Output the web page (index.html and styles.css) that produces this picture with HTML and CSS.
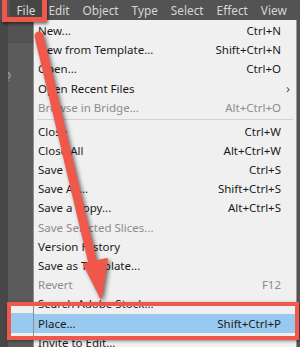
FILE: index.html
```html
<!DOCTYPE html>
<html lang="en">

<head>
    <meta charset="UTF-8">
    <title>File menu</title>
    <link rel="stylesheet" href="styles.css">
</head>

<body>
    <div class="menubar">
        <span class="menubar-item active">File</span>
        <span class="menubar-item">Edit</span>
        <span class="menubar-item">Object</span>
        <span class="menubar-item">Type</span>
        <span class="menubar-item">Select</span>
        <span class="menubar-item">Effect</span>
        <span class="menubar-item">View</span>
    </div>
    <div class="workspace">
        <div class="sidebar">
            <div class="sidebar-strip"></div>
            <div class="sidebar-panel"><span class="at">@</span></div>
        </div>
        <div class="menu">
            <div class="row"><span>New...</span><span>Ctrl+N</span></div>
            <div class="row"><span>New from Template...</span><span>Shift+Ctrl+N</span></div>
            <div class="row"><span>Open...</span><span>Ctrl+O</span></div>
            <div class="row sub"><span>Open Recent Files</span><span class="caret">&#8250;</span></div>
            <div class="row off"><span>Browse in Bridge...</span><span>Alt+Ctrl+O</span></div>
            <div class="sep"></div>
            <div class="row"><span>Close</span><span>Ctrl+W</span></div>
            <div class="row"><span>Close All</span><span>Alt+Ctrl+W</span></div>
            <div class="row"><span>Save</span><span>Ctrl+S</span></div>
            <div class="row"><span>Save As...</span><span>Shift+Ctrl+S</span></div>
            <div class="row"><span>Save a Copy...</span><span>Alt+Ctrl+S</span></div>
            <div class="row off"><span>Save Selected Slices...</span><span></span></div>
            <div class="row"><span>Version History</span><span></span></div>
            <div class="row"><span>Save as Template...</span><span></span></div>
            <div class="row off"><span>Revert</span><span>F12</span></div>
            <div class="row"><span>Search Adobe Stock...</span><span></span></div>
            <div class="row hot"><span>Place...</span><span>Shift+Ctrl+P</span></div>
            <div class="row"><span>Invite to Edit...</span><span></span></div>
        </div>
    </div>

    <!-- annotation layer -->
    <div class="callout-fill"></div>
    <div class="callout"></div>
    <div class="file-box"></div>
    <svg class="arrow" width="300" height="347" viewBox="0 0 300 347">
        <line x1="39" y1="36" x2="95" y2="272" stroke="#f0584c" stroke-width="9" stroke-linecap="round" />
        <polygon points="101,298 84,264 107,259" fill="#f0584c" stroke="#f0584c" stroke-width="2" stroke-linejoin="round" />
    </svg>
</body>

</html>
```

FILE: styles.css
```css
* {
    margin: 0;
    padding: 0;
    box-sizing: border-box;
}

html,
body {
    width: 300px;
    height: 347px;
    overflow: hidden;
}

body {
    position: relative;
    background-color: #535353;
    font-family: "Noto Sans", "Open Sans", sans-serif;
    font-size: 11.5px;
}
/* 菜单栏 */

.menubar {
    height: 20px;
    display: flex;
    align-items: center;
    padding-left: 10px;
    background-color: #535353;
    color: #d6d6d6;
    font-size: 11.8px;
}

.menubar-item {
    height: 20px;
    line-height: 20px;
    padding: 0 6.5px;
}

.menubar-item.active {
    background-color: #464646;
}
/* 工作区 */

.workspace {
    display: flex;
    height: 327px;
}

.sidebar {
    width: 33px;
    display: flex;
}

.sidebar-strip {
    width: 8px;
    background-color: #474747;
}

.sidebar-panel {
    flex: 1;
    background-color: #5b5b5b;
    border-top: 1px solid #4a4a4a;
    margin-top: 22px;
    padding-top: 26px;
    color: #bcbcbc;
    font-size: 10px;
    overflow: hidden;
}

.sidebar-panel .at {
    margin-left: -6px;
}

.menu {
    position: relative;
    z-index: 1;
    width: 264px;
    padding-top: 1px;
    background-color: #f0f0f0;
    border-left: 1px solid #8f8f8f;
    border-right: 1px solid #9a9a9a;
    color: #1b1b1b;
}

.row {
    height: 19.2px;
    line-height: 19.2px;
    display: flex;
    justify-content: space-between;
    padding: 0 15px 0 4px;
    white-space: nowrap;
}

.row.off {
    color: #8c8c8c;
}

.row.sub .caret {
    margin-right: -9px;
    color: #555;
    font-size: 13px;
}

.row.hot {
    background-color: #99c9ef;
}

.sep {
    height: 4.8px;
    padding-top: 2px;
}

.sep::after {
    content: "";
    display: block;
    margin: 0 3px;
    height: 1px;
    background-color: #d2d2d2;
}
/* 标注 */

.callout-fill {
    position: absolute;
    left: 7px;
    top: 302px;
    width: 30px;
    height: 38px;
    background: linear-gradient(#f0f0f0 11px, #99c9ef 11px, #99c9ef 31px, #f0f0f0 31px);
}

.callout {
    position: absolute;
    z-index: 2;
    left: 7px;
    top: 302px;
    width: 292px;
    height: 38px;
    border: 4px solid #f0584c;
    box-shadow: 1px 1px 3px rgba(0, 0, 0, .45);
}

.file-box {
    position: absolute;
    z-index: 2;
    left: 2px;
    top: -6px;
    width: 45px;
    height: 28px;
    border: 5px solid #f0584c;
    box-shadow: 1px 2px 3px rgba(0, 0, 0, .5);
}

.arrow {
    position: absolute;
    z-index: 3;
    left: 0;
    top: 0;
    filter: drop-shadow(2px 2px 2px rgba(0, 0, 0, .55));
}
```
